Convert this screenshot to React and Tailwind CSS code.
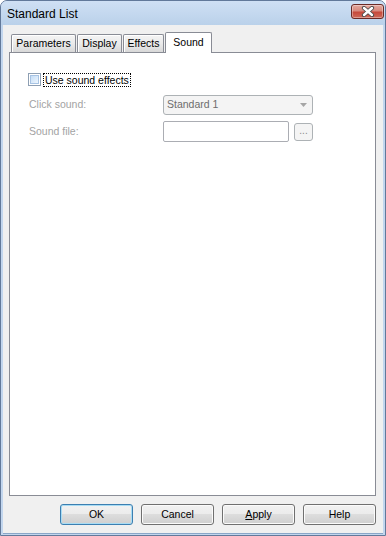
import React from "react";

const font = { fontFamily: '"Liberation Sans", Arial, sans-serif' };

const CloseButton = () => (
  <div className="w-[33px] h-[15px] rounded-[3px] border border-[#6b2a26] bg-[linear-gradient(to_bottom,#e4a89e_0%,#d88a7e_45%,#c6493b_55%,#cf6a5a_100%)] shadow-[inset_0_0_0_1px_rgba(255,255,255,0.35)] flex items-center justify-center">
    <svg width="14" height="11" viewBox="0 0 14 11">
      <path d="M3 2 L11 9 M11 2 L3 9" stroke="#4a4a4a" strokeWidth="4.2" strokeLinecap="round" />
      <path d="M3 2 L11 9 M11 2 L3 9" stroke="#ffffff" strokeWidth="2.4" strokeLinecap="round" />
    </svg>
  </div>
);

const Tab = ({ label, w, active }) =>
  active ? (
    <div
      className="relative z-10 h-[21px] -mb-px bg-white border border-b-0 border-[#898c95] rounded-t-[2px] flex items-center justify-center text-[10.5px] text-black"
      style={{ width: w }}
    >
      {label}
    </div>
  ) : (
    <div
      className="h-[18px] border border-b-0 border-[#898c95] rounded-t-[2px] bg-linear-to-b from-[#f4f4f4] via-[#ebebeb] to-[#d8d8d8] shadow-[inset_1px_1px_0_#ffffff] flex items-center justify-center text-[10.5px] text-black"
      style={{ width: w }}
    >
      {label}
    </div>
  );

const DlgButton = ({ children, def }) => (
  <div
    className={
      "w-[73px] h-[21px] rounded-[3px] border flex items-center justify-center text-[10.5px] text-black bg-[linear-gradient(to_bottom,#f2f2f2_0%,#ebebeb_49%,#dddddd_50%,#cfcfcf_100%)] " +
      (def
        ? "border-[#3c7fb1] shadow-[inset_0_0_0_1px_#a8dcf4]"
        : "border-[#707070] shadow-[inset_0_0_0_1px_#fbfbfb]")
    }
  >
    {children}
  </div>
);

export default function App() {
  return (
    <div
      className="w-[386px] h-[536px] flex flex-col bg-[#c2d6ee] border border-[#62799a] rounded-t-[7px] overflow-hidden"
      style={font}
    >
      {/* title bar */}
      <div className="h-[24px] flex items-center justify-between pl-[6px] pr-[1px] bg-linear-to-b from-[#cfe0f4] to-[#bad1ea]">
        <span className="text-[12px] text-black mt-[2px]">Standard List</span>
        <div className="self-start mt-[3px]">
          <CloseButton />
        </div>
      </div>

      {/* client area */}
      <div className="flex-1 mx-[2px] mb-[1px] bg-[#f0f0f0] pt-[7px] pl-[6px] pr-[7px] border-b border-[#8aa6c8]">
        <div className="flex items-end h-[20px] pl-[2px] gap-[1px]">
          <Tab label="Parameters" w={65} />
          <Tab label="Display" w={45} />
          <Tab label="Effects" w={41} />
          <Tab label="Sound" w={47} active />
        </div>

        <div className="h-[444px] bg-white border border-[#898c95] pl-[18px] pt-[20px]">
          <div className="flex items-center h-[13px]">
            <div className="w-[13px] h-[13px] border border-[#8e9fb3] bg-white p-[1px]">
              <div className="w-full h-full border border-[#a7c3e3] bg-linear-to-br from-[#c5ddf6] to-[#eef6fd]" />
            </div>
            <span className="ml-[2px] px-[1px] h-[14px] leading-[12px] border border-dotted border-black text-[10.5px] text-black">
              Use sound effects
            </span>
          </div>

          <div className="flex items-center mt-[9px] h-[20px]">
            <span className="w-[135px] pl-[1px] text-[10.5px] text-[#a3a3a3]">Click sound:</span>
            <div className="w-[150px] h-[20px] rounded-[3px] border border-[#adb2b5] bg-[#f4f4f4] flex items-center justify-between pl-[3px] pr-[5px]">
              <span className="text-[10.5px] text-[#6d6d6d]">Standard 1</span>
              <svg width="7" height="4" viewBox="0 0 7 4">
                <path d="M0 0 H7 L3.5 4 Z" fill="#a5a5a5" />
              </svg>
            </div>
          </div>

          <div className="flex items-center mt-[6px] h-[21px]">
            <span className="w-[135px] pl-[1px] text-[10.5px] text-[#a3a3a3]">Sound file:</span>
            <div className="w-[126px] h-[21px] rounded-[2px] border border-[#abadb3] bg-white" />
            <div className="ml-[5px] w-[19px] h-[18px] rounded-[3px] border border-[#adb2b5] bg-[#f4f4f4] flex items-center justify-center text-[10px] leading-none text-[#8a8a8a] pb-[2px]">
              ...
            </div>
          </div>
        </div>

        <div className="flex justify-end gap-[8px] mt-[8px]">
          <DlgButton def>OK</DlgButton>
          <DlgButton>Cancel</DlgButton>
          <DlgButton>
            <span>
              <span className="underline">A</span>pply
            </span>
          </DlgButton>
          <DlgButton>Help</DlgButton>
        </div>
      </div>
    </div>
  );
}
